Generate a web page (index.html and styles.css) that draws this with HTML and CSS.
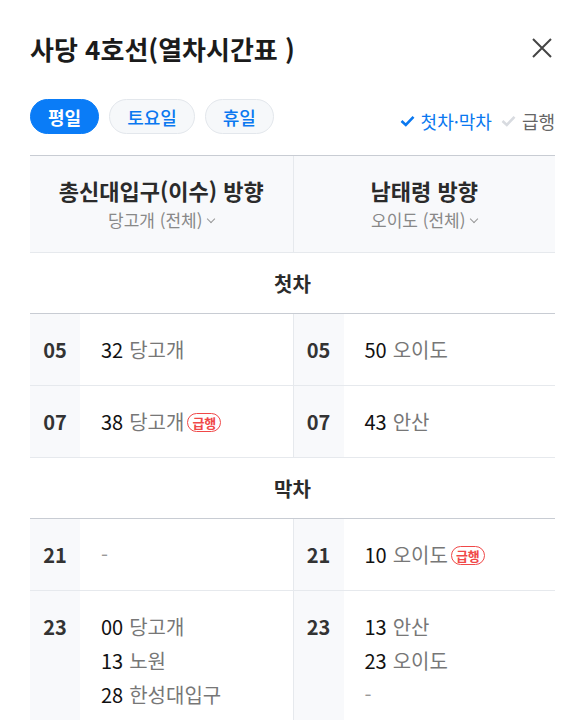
FILE: index.html
```html
<!DOCTYPE html>
<html lang="ko">
<head>
    <meta charset="UTF-8">
    <meta name="viewport" content="width=device-width, initial-scale=1.0">
    <title>사당 4호선 열차시간표</title>
    <link rel="stylesheet" href="styles.css">
</head>
<body>

    <div class="panel">
        <!-- Title -->
        <div class="panel-head">
            <h1>사당 4호선(열차시간표 )</h1>
            <button class="close-btn" aria-label="닫기">
                <svg width="22" height="22" viewBox="0 0 22 22">
                    <path d="M2 2 L20 20 M20 2 L2 20" stroke="#444" stroke-width="2" fill="none"/>
                </svg>
            </button>
        </div>

        <!-- Day tabs + filters -->
        <div class="toolbar">
            <div class="day-tabs">
                <button class="day-tab active">평일</button>
                <button class="day-tab">토요일</button>
                <button class="day-tab">휴일</button>
            </div>
            <div class="filters">
                <span class="filter on">
                    <svg width="15" height="12" viewBox="0 0 15 12"><path d="M1.5 6 L5.8 10 L13.5 1.8" stroke="currentColor" stroke-width="2.6" fill="none"/></svg>
                    첫차·막차
                </span>
                <span class="filter">
                    <svg width="15" height="12" viewBox="0 0 15 12"><path d="M1.5 6 L5.8 10 L13.5 1.8" stroke="#d8dbe0" stroke-width="2.6" fill="none"/></svg>
                    급행
                </span>
            </div>
        </div>

        <!-- Timetable -->
        <div class="timetable">
            <div class="dir-head">
                <div class="dir">
                    <strong>총신대입구(이수) 방향</strong>
                    <span class="dir-sub">당고개 (전체) <i class="chev"></i></span>
                </div>
                <div class="dir">
                    <strong>남태령 방향</strong>
                    <span class="dir-sub">오이도 (전체) <i class="chev"></i></span>
                </div>
            </div>

            <div class="section-title">첫차</div>
            <div class="row">
                <div class="cell"><span class="hour">05</span><div class="mins"><p><b>32</b> 당고개</p></div></div>
                <div class="cell"><span class="hour">05</span><div class="mins"><p><b>50</b> 오이도</p></div></div>
            </div>
            <div class="row">
                <div class="cell"><span class="hour">07</span><div class="mins"><p><b>38</b> 당고개<em class="express">급행</em></p></div></div>
                <div class="cell"><span class="hour">07</span><div class="mins"><p><b>43</b> 안산</p></div></div>
            </div>

            <div class="section-title">막차</div>
            <div class="row">
                <div class="cell"><span class="hour">21</span><div class="mins"><p class="none">-</p></div></div>
                <div class="cell"><span class="hour">21</span><div class="mins"><p><b>10</b> 오이도<em class="express">급행</em></p></div></div>
            </div>
            <div class="row">
                <div class="cell">
                    <span class="hour">23</span>
                    <div class="mins">
                        <p><b>00</b> 당고개</p>
                        <p><b>13</b> 노원</p>
                        <p><b>28</b> 한성대입구</p>
                    </div>
                </div>
                <div class="cell">
                    <span class="hour">23</span>
                    <div class="mins">
                        <p><b>13</b> 안산</p>
                        <p><b>23</b> 오이도</p>
                        <p class="none">-</p>
                    </div>
                </div>
            </div>
        </div>
    </div>

</body>
</html>
```

FILE: styles.css
```css
* {
    margin: 0;
    padding: 0;
    box-sizing: border-box;
    font-family: "Noto Sans CJK KR", "Noto Sans", sans-serif;
}

body {
    background-color: white;
    color: #222;
}

.panel {
    padding: 0 13px 0 30px;
}

.panel-head {
    display: flex;
    justify-content: space-between;
    align-items: center;
    padding-top: 26px;
    height: 70px;
}

h1 {
    font-size: 26px;
    font-weight: 700;
    color: #1b1b1b;
}

.close-btn {
    background: none;
    border: none;
    margin-right: 2px;
    cursor: pointer;
    display: flex;
}

.toolbar {
    display: flex;
    justify-content: space-between;
    align-items: flex-end;
    margin-top: 29px;
    margin-bottom: 21px;
}

.day-tabs {
    display: flex;
    gap: 10px;
}

.day-tab {
    height: 35px;
    padding: 0 17px;
    border-radius: 18px;
    border: 1px solid #e3e7ec;
    background-color: #f6f8fa;
    color: #0a78f0;
    font-size: 18px;
    font-weight: 500;
    cursor: pointer;
}

.day-tab.active {
    background-color: #0a7cf7;
    border-color: #0a7cf7;
    color: white;
    font-weight: 700;
}

.filters {
    display: flex;
    gap: 9px;
    font-size: 18px;
    color: #666;
}

.filter {
    display: flex;
    align-items: center;
    gap: 6px;
}

.filter.on {
    color: #0a78f0;
}

.timetable {
    border-top: 1px solid #c8ccd3;
}

.dir-head {
    display: grid;
    grid-template-columns: 1fr 1fr;
    background-color: #f8f9fb;
    border-bottom: 1px solid #e6e9ed;
}

.dir {
    height: 96px;
    display: flex;
    flex-direction: column;
    align-items: center;
    justify-content: center;
    padding-bottom: 2px;
}

.dir + .dir {
    border-left: 1px solid #e6e9ed;
}

.dir strong {
    font-size: 22px;
    font-weight: 700;
    line-height: 34px;
    color: #2b2b2b;
}

.dir-sub {
    font-size: 17px;
    line-height: 26px;
    color: #888;
    display: flex;
    align-items: center;
    gap: 6px;
}

.chev {
    width: 6px;
    height: 6px;
    border-right: 1.2px solid #999;
    border-bottom: 1.2px solid #999;
    transform: rotate(45deg);
    margin-top: -3px;
}

.section-title {
    height: 61px;
    display: flex;
    align-items: center;
    justify-content: center;
    font-size: 20px;
    font-weight: 700;
    color: #2b2b2b;
    border-bottom: 1px solid #c8ccd3;
}

.row {
    display: grid;
    grid-template-columns: 1fr 1fr;
    border-bottom: 1px solid #e6e9ed;
}

.cell {
    display: flex;
}

.cell + .cell {
    border-left: 1px solid #e6e9ed;
}

.hour {
    width: 50px;
    flex-shrink: 0;
    background-color: #f8f9fb;
    text-align: center;
    padding-top: 19px;
    line-height: 34px;
    font-size: 20px;
    font-weight: 700;
    color: #333;
}

.mins {
    padding: 19px 0 18px 21px;
}

.mins p {
    line-height: 34px;
    font-size: 20px;
    color: #777;
    display: flex;
    align-items: center;
}

.mins b {
    font-weight: 400;
    color: #111;
    margin-right: 6px;
}

.mins p.none {
    color: #999;
}

.express {
    font-style: normal;
    font-size: 13px;
    font-weight: 700;
    color: #f04848;
    border: 1.5px solid #f04848;
    border-radius: 11px;
    padding: 0 4px;
    line-height: 17px;
    margin-left: 3px;
}
```
